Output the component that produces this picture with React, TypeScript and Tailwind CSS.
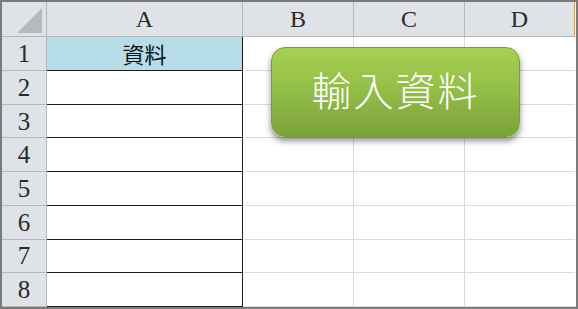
const cols = ["A", "B", "C", "D"];
const rows = [1, 2, 3, 4, 5, 6, 7, 8];

const serif = "font-['Liberation_Serif','DejaVu_Serif',serif]";
const cjk = "font-['Noto_Sans_CJK_TC','Noto_Sans_CJK_SC',sans-serif]";

const Corner = () => (
  <div className="relative border-r border-b border-[#b4b8bd] bg-[#dfe3e8]">
    <svg className="absolute left-[15px] top-[6px]" width="26" height="26" viewBox="0 0 26 26">
      <polygon points="25,0 25,25 0,25" fill="#b6babe" />
    </svg>
  </div>
);

const App = () => {
  return (
    <div className="relative h-[309px] w-[578px] overflow-hidden border-2 border-[#7b7b7b] bg-white">
      <div className="grid h-full grid-cols-[45px_196px_111px_111px_110px] grid-rows-[35px_repeat(8,1fr)]">
        <Corner />
        {cols.map((c) => (
          <div
            key={c}
            className={`flex items-center justify-center border-r border-b border-[#b4b8bd] bg-[#dfe3e8] text-[24px] leading-none text-[#2a2a2a] ${serif} ${c === "D" ? "border-r-[#d9a24a]" : ""}`}
          >
            {c}
          </div>
        ))}
        {rows.map((r) => (
          <div key={r} className="contents">
            <div
              className={`flex items-center justify-center border-r border-b border-[#b4b8bd] bg-[#dfe3e8] text-[25px] leading-none text-[#2a2a2a] ${serif}`}
            >
              {r}
            </div>
            <div
              className={`flex items-center justify-center border-r border-b border-[#1e1e1e] text-[22px] text-[#111] ${cjk} ${r === 1 ? "bg-[#b7dde8]" : "bg-white"}`}
            >
              {r === 1 ? "資料" : ""}
            </div>
            <div className="border-r border-b border-[#dadada]" />
            <div className="border-r border-b border-[#dadada]" />
            <div className="border-b border-[#dadada]" />
          </div>
        ))}
      </div>

      <button
        className={`absolute left-[269px] top-[45px] flex h-[90px] w-[249px] items-center justify-center rounded-[14px] border border-[#78a034] bg-gradient-to-b from-[#a6d052] via-[#92bd46] to-[#7ca23b] pb-[6px] text-[40px] font-light tracking-[2px] text-white shadow-[0_4px_6px_rgba(0,0,0,0.45)] ${cjk}`}
      >
        輸入資料
      </button>
    </div>
  );
};

export default App;
